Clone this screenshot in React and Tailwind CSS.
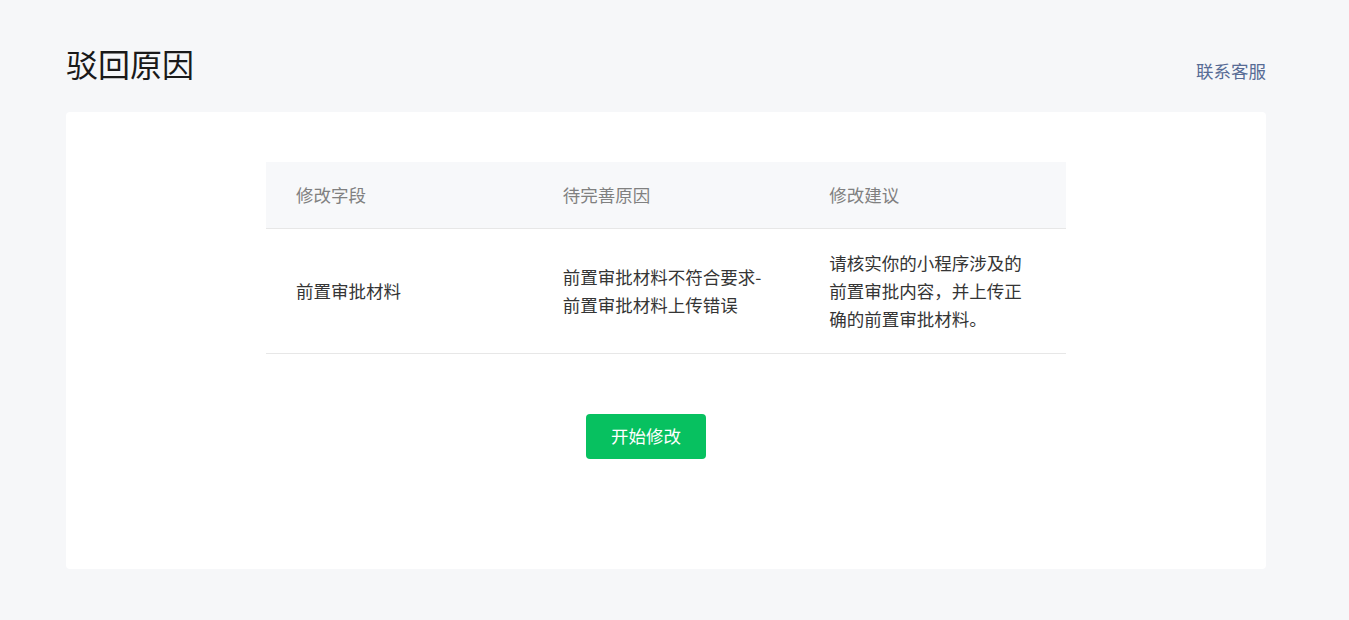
import React from 'react'

const rows = [
  {
    field: '前置审批材料',
    reason: '前置审批材料不符合要求-前置审批材料上传错误',
    advice: '请核实你的小程序涉及的前置审批内容，并上传正确的前置审批材料。',
  },
]

export default function App() {
  return (
    <div
      className="min-h-[620px] bg-[#f6f7f9] pl-[66px]"
      style={{ fontFamily: '"Noto Sans CJK SC", "Noto Sans", sans-serif' }}
    >
      <div className="w-[1200px]">
        <div className="flex items-start justify-between pt-[39px]">
          <h1 className="text-[32px] leading-[48px] font-normal text-[#1a1a1a]">驳回原因</h1>
          <a href="#" className="mt-[19px] text-[17.5px] leading-[26px] text-[#576b95]">
            联系客服
          </a>
        </div>

        <div className="mt-[25px] rounded-[4px] bg-white pt-[50px] pb-[110px]">
          <div className="mx-auto w-[800px]">
            <div className="grid h-[67px] grid-cols-3 items-center border-b border-[#e7e7e7] bg-[#f7f8fa] text-[17.5px] text-[#808080]">
              <div className="pl-[30px]">修改字段</div>
              <div className="pl-[30px]">待完善原因</div>
              <div className="pl-[30px]">修改建议</div>
            </div>
            {rows.map((r, i) => (
              <div
                key={i}
                className="grid grid-cols-3 items-center border-b border-[#e7e7e7] py-[20px] text-[17.5px] leading-[28px] text-[#353535]"
              >
                <div className="px-[30px]">{r.field}</div>
                <div className="px-[30px]">{r.reason}</div>
                <div className="px-[30px]">{r.advice}</div>
              </div>
            ))}
          </div>

          <div className="mt-[60px] flex justify-center">
            <button className="mr-[40px] h-[45px] w-[120px] rounded-[4px] bg-[#07c160] text-[17.5px] text-white">
              开始修改
            </button>
          </div>
        </div>
      </div>
    </div>
  )
}
